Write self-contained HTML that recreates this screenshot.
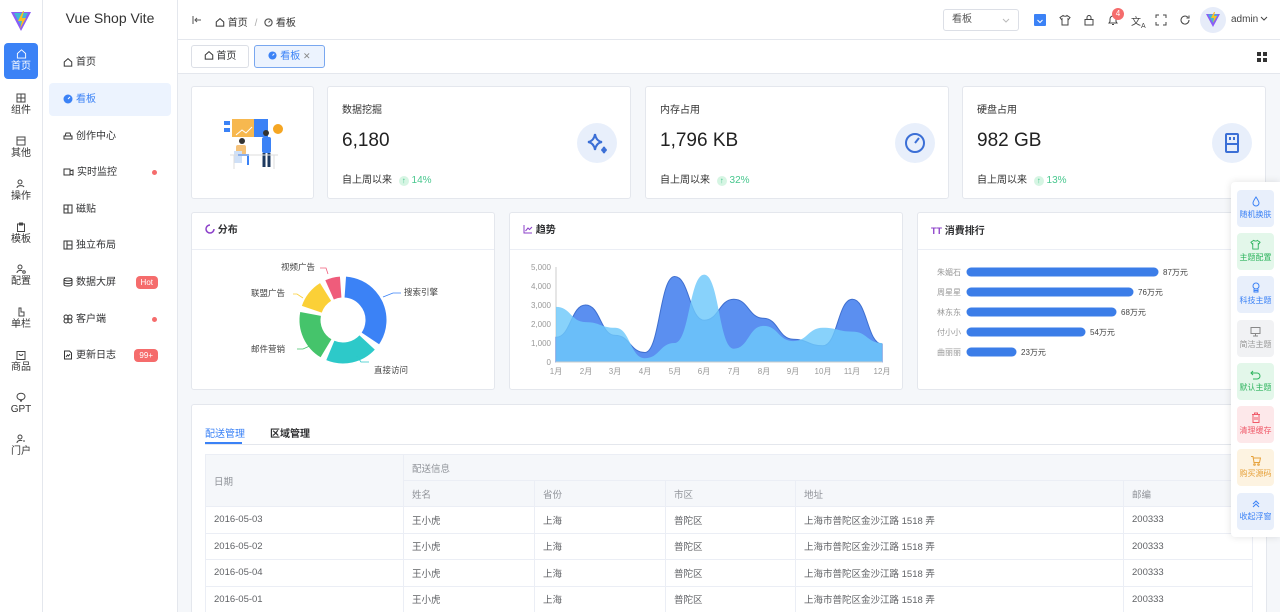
<!DOCTYPE html>
<html><head><meta charset="utf-8"><style>
*{box-sizing:border-box;margin:0;padding:0}
html{width:1280px;height:612px;overflow:hidden}
body{width:1280px;height:612px;overflow:hidden;position:relative;background:#f5f7fa;font-family:"Liberation Sans","Noto Sans CJK SC",sans-serif;color:#303133}
.a{position:absolute}
.rail{left:0;top:0;width:43px;height:612px;background:#fff;border-right:1px solid #e4e7ed}
.ri{position:absolute;left:4px;width:34px;height:36px;text-align:center;font-size:10px;color:#333;line-height:12px}
.ri svg{display:block;margin:5px auto 2px}
.side{left:43px;top:0;width:135px;height:612px;background:#fff;border-right:1px solid #e4e7ed}
.mi{position:absolute;left:6px;width:122px;height:33px;font-size:10px;line-height:33px;padding-left:14px;color:#303133}
.mi svg{vertical-align:-2px;margin-right:3px}
.dot{position:absolute;right:14px;top:14px;width:5px;height:5px;border-radius:50%;background:#f56c6c}
.bdg{position:absolute;right:13px;top:10px;height:13px;line-height:13px;border-radius:4px;background:#f56c6c;color:#fff;font-size:8px;padding:0 5px}
.hdr{left:178px;top:0;width:1102px;height:40px;background:#fff;border-bottom:1px solid #e4e7ed}
.tabs{left:178px;top:40px;width:1102px;height:34px;background:#fff;border-bottom:1px solid #e4e7ed}
.card{position:absolute;background:#fff;border:1px solid #e4e7ed;border-radius:3px}
.st{font-size:10px;color:#333;position:absolute;left:14px;top:14px}
.num{font-size:19px;position:absolute;left:14px;top:43px;color:#222}
.ft{font-size:10px;position:absolute;left:14px;top:84px;color:#333}
.ft b{font-weight:normal;color:#48c78e;margin-left:4px}
.ic{position:absolute;right:13px;top:36px;width:40px;height:40px;border-radius:50%;background:#e8effb}
.ch{height:37px;border-bottom:1px solid #ebeef5;font-size:10px;font-weight:bold;line-height:36px;padding-left:13px}
.fp{left:1231px;top:182px;width:49px;height:355px;background:#fff;box-shadow:0 0 8px rgba(0,0,0,.12);border-radius:4px 0 0 4px}
.fb{position:absolute;left:6px;width:37px;height:37px;border-radius:4px;font-size:8px;text-align:center;line-height:10px;padding-top:6px}
.fb svg{display:block;margin:0 auto 3px}
table{border-collapse:collapse;font-size:9.5px;color:#606266}
td{border:1px solid #ebeef5;height:26.5px;padding-left:8px}
th{border:1px solid #ebeef5;background:#f5f7fa;font-weight:normal;text-align:left;padding-left:8px;color:#909399;height:26px}
</style></head><body>

<div class="a rail">
 <svg class="a" style="left:10px;top:10px" width="22" height="22" viewBox="0 0 22 22"><path d="M1 2h20L11 21z" fill="#8b5cf6"/><path d="M4 3h14L11 16z" fill="#41b8d6"/><path d="M13 1l-5 10h4l-2 8 6-11h-4l2-7z" fill="#fbbf24"/></svg>
 <div class="ri" style="top:43px;background:#3b82f6;color:#fff;border-radius:4px"><svg width="11" height="11" viewBox="0 0 12 12" fill="none" stroke="#fff"><path d="M1.5 6L6 2l4.5 4v5h-9z"/></svg>首页</div>
 <div class="ri" style="top:88px"><svg width="10" height="10" viewBox="0 0 10 10" fill="none" stroke="#444"><rect x="1" y="1" width="8" height="8"/><path d="M1 5h8M5 1v8"/></svg>组件</div>
 <div class="ri" style="top:131px"><svg width="10" height="10" viewBox="0 0 10 10" fill="none" stroke="#444"><rect x="1" y="1" width="8" height="8"/><path d="M1 4h8"/></svg>其他</div>
 <div class="ri" style="top:174px"><svg width="10" height="10" viewBox="0 0 10 10" fill="none" stroke="#444"><circle cx="4" cy="3" r="2"/><path d="M1 9c0-3 6-3 7-1"/></svg>操作</div>
 <div class="ri" style="top:217px"><svg width="10" height="10" viewBox="0 0 10 10" fill="none" stroke="#444"><rect x="1.5" y="2" width="7" height="7.5"/><path d="M3.5 1h3v2h-3z"/></svg>模板</div>
 <div class="ri" style="top:259px"><svg width="10" height="10" viewBox="0 0 10 10" fill="none" stroke="#444"><circle cx="4" cy="3" r="2"/><path d="M1 9c0-3 5-3 5-2"/><circle cx="8" cy="8" r="1.3"/></svg>配置</div>
 <div class="ri" style="top:302px"><svg width="10" height="10" viewBox="0 0 10 10" fill="none" stroke="#444"><path d="M3 1v8h5V5H5V1z"/></svg>单栏</div>
 <div class="ri" style="top:345px"><svg width="10" height="10" viewBox="0 0 10 10" fill="none" stroke="#444"><rect x="1" y="1.5" width="8" height="8"/><path d="M3 4c1 2 3 2 4 0"/></svg>商品</div>
 <div class="ri" style="top:387px"><svg width="10" height="10" viewBox="0 0 10 10" fill="none" stroke="#444"><ellipse cx="5" cy="4.5" rx="4" ry="3.3"/><path d="M4 8l1 1.5 1-1.5"/></svg>GPT</div>
 <div class="ri" style="top:429px"><svg width="10" height="10" viewBox="0 0 10 10" fill="none" stroke="#444"><circle cx="4" cy="3" r="2"/><path d="M1 9c0-3 5-3 5-2M7 7h2"/></svg>门户</div>
</div>

<div class="a side">
 <div class="a" style="left:0;width:134px;top:10px;text-align:center;font-size:14px;color:#333">Vue Shop Vite</div>
 <div class="mi" style="top:46px"><svg width="10" height="10" viewBox="0 0 12 12" fill="none" stroke="#333" stroke-width="1.2"><path d="M1.5 6L6 2l4.5 4v5h-9z"/></svg>首页</div>
 <div class="mi" style="top:83px;background:#ecf3fe;color:#3b82f6;border-radius:4px"><svg width="10" height="10" viewBox="0 0 10 10"><circle cx="5" cy="5" r="4.5" fill="#3b82f6"/><path d="M5 5l2-2" stroke="#fff"/></svg>看板</div>
 <div class="mi" style="top:120px"><svg width="10" height="10" viewBox="0 0 10 10" fill="none" stroke="#333"><path d="M1 5h8v3H1zM2 5l1-3h4l1 3"/></svg>创作中心</div>
 <div class="mi" style="top:156px"><svg width="11" height="10" viewBox="0 0 11 10" fill="none" stroke="#333"><rect x="1" y="2" width="6" height="6"/><path d="M7 4l3-1v5l-3-1"/></svg>实时监控<span class="dot"></span></div>
 <div class="mi" style="top:193px"><svg width="10" height="10" viewBox="0 0 10 10" fill="none" stroke="#333"><rect x="1" y="1" width="8" height="8"/><path d="M5 1v8M1 5h4"/></svg>磁贴</div>
 <div class="mi" style="top:229px"><svg width="10" height="10" viewBox="0 0 10 10" fill="none" stroke="#333"><rect x="1" y="1" width="8" height="8"/><path d="M4 1v8M4 5h5"/></svg>独立布局</div>
 <div class="mi" style="top:266px"><svg width="10" height="10" viewBox="0 0 10 10" fill="none" stroke="#333"><ellipse cx="5" cy="2.5" rx="4" ry="1.5"/><path d="M1 2.5v5c0 2 8 2 8 0v-5M1 5c0 2 8 2 8 0"/></svg>数据大屏<span class="bdg">Hot</span></div>
 <div class="mi" style="top:303px"><svg width="10" height="10" viewBox="0 0 10 10" fill="none" stroke="#333"><circle cx="3" cy="3" r="2"/><circle cx="7" cy="3" r="2"/><circle cx="3" cy="7" r="2"/><circle cx="7" cy="7" r="2"/></svg>客户端<span class="dot"></span></div>
 <div class="mi" style="top:339px"><svg width="10" height="10" viewBox="0 0 10 10" fill="none" stroke="#333"><path d="M1.5 1h5l2 2v6h-7z"/><path d="M3 7l1.5-2 1 1 1.5-2"/></svg>更新日志<span class="bdg">99+</span></div>
</div>

<div class="a hdr">
 <svg class="a" style="left:14px;top:15px" width="10" height="10" viewBox="0 0 10 10" fill="none" stroke="#555"><path d="M1 1v8M9 5H3M5 3L3 5l2 2"/></svg>
 <div class="a" style="left:37px;top:14px;font-size:10px;color:#333"><svg width="10" height="10" viewBox="0 0 12 12" fill="none" stroke="#333" stroke-width="1.2" style="vertical-align:-1px"><path d="M1.5 6L6 2l4.5 4v5h-9z"/></svg> 首页 <span style="color:#aaa;margin:0 4px">/</span> <svg width="9" height="9" viewBox="0 0 10 10" style="vertical-align:-1px"><circle cx="5" cy="5" r="4" fill="none" stroke="#555" stroke-width="1.3"/><path d="M5 5l2-2" stroke="#555"/></svg> 看板</div>
 <div class="a" style="left:765px;top:9px;width:76px;height:22px;border:1px solid #dcdfe6;border-radius:3px;font-size:10px;color:#555;line-height:20px;padding-left:8px">看板<svg class="a" style="right:8px;top:8px" width="8" height="5" viewBox="0 0 8 5" fill="none" stroke="#bbb"><path d="M1 1l3 3 3-3"/></svg></div>
 <div class="a" style="left:856px;top:14px;width:12px;height:12px;background:#3b82f6;border-radius:1px"><svg width="12" height="12" viewBox="0 0 12 12"><path d="M3.5 5l2.5 2.5L8.5 5" stroke="#fff" fill="none"/></svg></div>
 <svg class="a" style="left:881px;top:14px" width="12" height="12" viewBox="0 0 12 12" fill="none" stroke="#444"><path d="M4 1.5L1 3.5l1.5 2L3 5v6h6V5l.5.5 1.5-2-3-2c-.5 1-3 1-4 0z"/></svg>
 <svg class="a" style="left:905px;top:14px" width="12" height="12" viewBox="0 0 12 12" fill="none" stroke="#444"><rect x="2" y="5.5" width="8" height="5.5"/><path d="M4 5.5V3.5a2 2 0 014 0v2"/></svg>
 <svg class="a" style="left:929px;top:14px" width="12" height="12" viewBox="0 0 12 12" fill="none" stroke="#444"><path d="M2 9h8L9 7.5V5a3 3 0 00-6 0v2.5zM5 10.5h2"/></svg>
 <div class="a" style="left:934px;top:8px;width:12px;height:12px;border-radius:6px;background:#f56c6c;color:#fff;font-size:8px;text-align:center;line-height:12px">4</div>
 <div class="a" style="left:953px;top:13px;font-size:10px;color:#444">文<sub style="font-size:7px">A</sub></div>
 <svg class="a" style="left:977px;top:14px" width="12" height="12" viewBox="0 0 12 12" fill="none" stroke="#444"><path d="M1 4V1h3M8 1h3v3M11 8v3H8M4 11H1V8"/></svg>
 <svg class="a" style="left:1001px;top:14px" width="12" height="12" viewBox="0 0 12 12" fill="none" stroke="#444"><path d="M10 6a4 4 0 11-1.2-2.8M10 1.5v2.5H7.5"/></svg>
 <div class="a" style="left:1022px;top:7px;width:26px;height:26px;border-radius:50%;background:#e6ecf9"><svg width="26" height="26" viewBox="0 0 26 26"><path d="M6 7h14l-7 13z" fill="#8b5cf6"/><path d="M8 7.5h10L13 16z" fill="#41b8d6"/><path d="M14 5l-3 6h3l-1 5 4-7h-3l1-4z" fill="#fbbf24"/></svg></div>
 <div class="a" style="left:1053px;top:14px;font-size:10px;color:#444">admin<svg width="8" height="5" viewBox="0 0 8 5" fill="none" stroke="#444" style="margin-left:2px;vertical-align:1px"><path d="M1 1l3 3 3-3"/></svg></div>
</div>

<div class="a tabs">
 <div class="a" style="left:13px;top:5px;width:58px;height:23px;border:1px solid #dcdfe6;border-radius:3px;background:#fff;font-size:10px;line-height:21px;text-align:center"><svg width="10" height="10" viewBox="0 0 12 12" fill="none" stroke="#333" stroke-width="1.2" style="vertical-align:-1px"><path d="M1.5 6L6 2l4.5 4v5h-9z"/></svg> 首页</div>
 <div class="a" style="left:76px;top:5px;width:71px;height:23px;border:1px solid #79a7ef;border-radius:3px;background:#ecf3fe;color:#3b82f6;font-size:10px;line-height:21px;text-align:center"><svg width="9" height="9" viewBox="0 0 10 10" style="vertical-align:-1px"><circle cx="5" cy="5" r="4.5" fill="#3b82f6"/><path d="M5 5l2-2" stroke="#fff"/></svg> 看板 <span style="color:#888;font-size:9px">✕</span></div>
 <svg class="a" style="left:1079px;top:12px" width="10" height="10" viewBox="0 0 10 10" fill="#333"><rect width="4" height="4"/><rect x="6" width="4" height="4"/><rect y="6" width="4" height="4"/><rect x="6" y="6" width="4" height="4"/></svg>
</div>

<div class="card" style="left:191px;top:86px;width:123px;height:113px">
 <svg class="a" style="left:28px;top:28px" width="66" height="58" viewBox="0 0 66 58"><rect x="12" y="4" width="28" height="18" fill="#f5a623" opacity=".8"/><rect x="34" y="4" width="14" height="18" fill="#3b82f6"/><rect x="4" y="6" width="6" height="4" fill="#3b82f6"/><rect x="4" y="13" width="6" height="4" fill="#3b82f6"/><circle cx="58" cy="14" r="5" fill="#f5a623"/><path d="M16 20l6-5 4 3 6-6" stroke="#fff" fill="none"/><circle cx="46" cy="18" r="3" fill="#333"/><rect x="42" y="22" width="9" height="16" fill="#3b82f6" rx="2"/><path d="M44 38v14M49 38v14" stroke="#1e3a5f" stroke-width="3"/><circle cx="22" cy="26" r="3" fill="#333"/><rect x="16" y="30" width="10" height="10" fill="#f5c27a" rx="2"/><rect x="14" y="36" width="8" height="12" fill="#cfe0f7"/><path d="M18 40h10v10" stroke="#3b82f6" fill="none" stroke-width="2"/><path d="M10 40h48M14 40v14M54 40v14" stroke="#ddd"/></svg>
</div>
<div class="card" style="left:327px;top:86px;width:304px;height:113px"><div class="st">数据挖掘</div><div class="num">6,180</div><div class="ft">自上周以来 <b><span style="display:inline-block;width:10px;height:10px;border-radius:5px;background:#d6f5e3;text-align:center;line-height:10px;font-size:8px">↑</span> 14%</b></div><div class="ic"><svg width="40" height="40" viewBox="0 0 40 40" fill="none" stroke="#3b6fd6" stroke-width="2"><path d="M18 11q1 7 7 8-6 1-7 8-1-7-7-8 6-1 7-8z"/><path d="M27 24q.5 2.5 2.5 3-2 .5-2.5 3-.5-2.5-2.5-3 2-.5 2.5-3z" fill="#3b6fd6"/></svg></div></div>
<div class="card" style="left:645px;top:86px;width:304px;height:113px"><div class="st">内存占用</div><div class="num">1,796 KB</div><div class="ft">自上周以来 <b><span style="display:inline-block;width:10px;height:10px;border-radius:5px;background:#d6f5e3;text-align:center;line-height:10px;font-size:8px">↑</span> 32%</b></div><div class="ic"><svg width="40" height="40" viewBox="0 0 40 40" fill="none" stroke="#3b6fd6" stroke-width="2"><circle cx="20" cy="20" r="9"/><path d="M20 20l4-5"/></svg></div></div>
<div class="card" style="left:962px;top:86px;width:304px;height:113px"><div class="st">硬盘占用</div><div class="num">982 GB</div><div class="ft">自上周以来 <b><span style="display:inline-block;width:10px;height:10px;border-radius:5px;background:#d6f5e3;text-align:center;line-height:10px;font-size:8px">↑</span> 13%</b></div><div class="ic"><svg width="40" height="40" viewBox="0 0 40 40" fill="none" stroke="#3b6fd6" stroke-width="2"><rect x="14" y="11" width="12" height="18" rx="1"/><path d="M14 21h12M18 14v3M22 14v3"/></svg></div></div>

<div class="card" style="left:191px;top:212px;width:304px;height:178px"><div class="ch"><svg width="10" height="10" viewBox="0 0 10 10" style="vertical-align:-1px"><path d="M5 1a4 4 0 104 4" fill="none" stroke="#8b3fc9" stroke-width="1.5"/></svg> 分布</div></div>
<div class="card" style="left:509px;top:212px;width:394px;height:178px"><div class="ch"><svg width="10" height="10" viewBox="0 0 10 10" style="vertical-align:-1px" fill="none" stroke="#8b3fc9"><path d="M1 1v8h8M2.5 7l2.5-3 1.5 1.5L9 3"/></svg> 趋势</div></div>
<div class="card" style="left:917px;top:212px;width:330px;height:178px"><div class="ch"><span style="color:#8b3fc9;font-size:9px">TT</span> 消費排行</div></div>

<svg class="a" style="left:0;top:0" width="1280" height="612">
 <g transform="translate(343 320)" fill="none" stroke-width="21">
  <circle r="33" stroke="#3b82f6" stroke-dasharray="69 300" transform="rotate(-86)"/>
  <circle r="33" stroke="#2dc9c9" stroke-dasharray="40 300" transform="rotate(43)"/>
  <circle r="33" stroke="#45c46b" stroke-dasharray="40 300" transform="rotate(121)"/>
  <circle r="33" stroke="#fbd037" stroke-dasharray="22.5 300" transform="rotate(199)"/>
  <circle r="33" stroke="#ef5c7b" stroke-dasharray="11.5 300" transform="rotate(246)"/>
 </g>
 <g fill="none" stroke-width=".8">
  <path d="M383 297l10-4h8" stroke="#3b82f6"/><path d="M357 356l4 6h8" stroke="#2dc9c9"/><path d="M312 345l-9 4h-6" stroke="#45c46b"/><path d="M303 298l-6-4h-4" stroke="#fbd037"/><path d="M328 274l-2-6h-6" stroke="#ef5c7b"/>
 </g>
 <g font-size="8.5" fill="#444">
  <text x="404" y="295">搜索引擎</text><text x="374" y="373">直接访问</text><text x="251" y="352">邮件营销</text><text x="251" y="296">联盟广告</text><text x="281" y="270">视频广告</text>
 </g>
 <g font-size="8" fill="#999" text-anchor="end">
  <text x="551" y="270">5,000</text><text x="551" y="289">4,000</text><text x="551" y="308">3,000</text><text x="551" y="327">2,000</text><text x="551" y="346">1,000</text><text x="551" y="365">0</text>
 </g>
 <path d="M556 267v95" stroke="#ccc"/>
 <path d="M556,337.3 C570.8,337.3 570.8,305 585.6,305 C600.4,305 600.5,335.4 615.3,335.4 C630.1,335.4 630.1,352.5 644.9,352.5 C659.7,352.5 659.8,276.5 674.6,276.5 C689.4,276.5 689.4,320.2 704.2,320.2 C719,320.2 719,299.3 733.8,299.3 C748.6,299.3 748.7,318.3 763.5,318.3 C778.3,318.3 778.3,339.2 793.1,339.2 C807.9,339.2 808,345.8 822.8,345.8 C837.6,345.8 837.6,299.3 852.4,299.3 C867.2,299.3 867.2,344 882,344 L882,362 L556,362 Z" fill="#5b8ff0" stroke="#3f6fcf"/>
 <path d="M556,306.9 C570.8,306.9 570.8,322.1 585.6,322.1 C600.4,322.1 600.5,327.8 615.3,327.8 C630.1,327.8 630.1,358.2 644.9,358.2 C659.7,358.2 659.8,343 674.6,343 C689.4,343 689.4,274.6 704.2,274.6 C719,274.6 719,348.7 733.8,348.7 C748.6,348.7 748.7,325.9 763.5,325.9 C778.3,325.9 778.3,341.1 793.1,341.1 C807.9,341.1 808,327.8 822.8,327.8 C837.6,327.8 837.6,331.6 852.4,331.6 C867.2,331.6 867.2,343 882,343 L882,362 L556,362 Z" fill="rgba(110,200,250,0.82)"/>
 <path d="M556 362h326" stroke="#ccc"/>
 <g font-size="8" fill="#999" text-anchor="middle">
  <text x="556" y="374">1月</text><text x="586" y="374">2月</text><text x="615" y="374">3月</text><text x="645" y="374">4月</text><text x="675" y="374">5月</text><text x="704" y="374">6月</text><text x="734" y="374">7月</text><text x="764" y="374">8月</text><text x="793" y="374">9月</text><text x="823" y="374">10月</text><text x="852" y="374">11月</text><text x="882" y="374">12月</text>
 </g>
 <g stroke="#3b7de8" stroke-width="9" stroke-linecap="round">
  <path d="M971 272h183"/><path d="M971 292h158"/><path d="M971 312h141"/><path d="M971 332h110"/><path d="M971 352h41"/>
 </g>
 <g font-size="8" fill="#999"><text x="937" y="275">朱媚石</text><text x="937" y="295">周星星</text><text x="937" y="315">林东东</text><text x="937" y="335">付小小</text><text x="937" y="355">曲丽丽</text></g>
 <g font-size="8" fill="#444"><text x="1163" y="275">87万元</text><text x="1138" y="295">76万元</text><text x="1121" y="315">68万元</text><text x="1090" y="335">54万元</text><text x="1021" y="355">23万元</text></g>
</svg>

<div class="card" style="left:191px;top:404px;width:1076px;height:210px;border-bottom:none">
 <div class="a" style="left:13px;top:20px;font-size:10px;color:#3b82f6">配送管理</div>
 <div class="a" style="left:13px;top:37px;width:37px;height:2px;background:#3b82f6"></div>
 <div class="a" style="left:78px;top:20px;font-size:10px;font-weight:bold">区域管理</div>
 <div class="a" style="left:13px;top:39px;width:1048px;height:1px;background:#e4e7ed"></div>
 <table class="a" style="left:13px;top:49px;width:1048px">
  <tr><th rowspan="2" style="width:198px">日期</th><th colspan="5">配送信息</th></tr>
  <tr><th style="width:131px">姓名</th><th style="width:131px">省份</th><th style="width:130px">市区</th><th style="width:328px">地址</th><th>邮编</th></tr>
  <tr><td>2016-05-03</td><td>王小虎</td><td>上海</td><td>普陀区</td><td>上海市普陀区金沙江路 1518 弄</td><td>200333</td></tr>
  <tr><td>2016-05-02</td><td>王小虎</td><td>上海</td><td>普陀区</td><td>上海市普陀区金沙江路 1518 弄</td><td>200333</td></tr>
  <tr><td>2016-05-04</td><td>王小虎</td><td>上海</td><td>普陀区</td><td>上海市普陀区金沙江路 1518 弄</td><td>200333</td></tr>
  <tr><td>2016-05-01</td><td>王小虎</td><td>上海</td><td>普陀区</td><td>上海市普陀区金沙江路 1518 弄</td><td>200333</td></tr>
 </table>
</div>

<div class="a fp">
 <div class="fb" style="top:8px;background:#e8effb;color:#3b82f6"><svg width="10" height="11" viewBox="0 0 10 11" fill="none" stroke="#3b82f6"><path d="M5 1C3 4 2 5.5 2 7a3 3 0 006 0c0-1.5-1-3-3-6z"/></svg>随机换肤</div>
 <div class="fb" style="top:51px;background:#e3f7ea;color:#2fb45f"><svg width="11" height="11" viewBox="0 0 12 12" fill="none" stroke="#2fb45f"><path d="M4 1.5L1 3.5l1.5 2L3 5v6h6V5l.5.5 1.5-2-3-2c-.5 1-3 1-4 0z"/></svg>主题配置</div>
 <div class="fb" style="top:94px;background:#e8effb;color:#3b82f6"><svg width="10" height="11" viewBox="0 0 10 11" fill="none" stroke="#3b82f6"><circle cx="5" cy="4" r="3"/><path d="M3 7v3h4V7M3 8.5h4"/></svg>科技主题</div>
 <div class="fb" style="top:138px;background:#f1f2f4;color:#999"><svg width="11" height="11" viewBox="0 0 11 11" fill="none" stroke="#888"><rect x="1" y="1.5" width="9" height="6"/><path d="M5.5 7.5v2M3 10h5"/></svg>简洁主题</div>
 <div class="fb" style="top:181px;background:#e3f7ea;color:#2fb45f"><svg width="11" height="11" viewBox="0 0 11 11" fill="none" stroke="#2fb45f"><path d="M3 2L1 4l2 2M1 4h6a3 3 0 010 6H3"/></svg>默认主题</div>
 <div class="fb" style="top:224px;background:#fde8ea;color:#f05a6a"><svg width="10" height="11" viewBox="0 0 10 11" fill="none" stroke="#f05a6a"><path d="M1 2.5h8M3.5 2.5V1h3v1.5M2 2.5v8h6v-8M4 5v3M6 5v3"/></svg>清理缓存</div>
 <div class="fb" style="top:267px;background:#fdf3e1;color:#e6a23c"><svg width="11" height="11" viewBox="0 0 11 11" fill="none" stroke="#e6a23c"><path d="M1 1.5h2l1 6h5.5l1-4.5H3.3"/><circle cx="4.5" cy="9.5" r=".8"/><circle cx="8.5" cy="9.5" r=".8"/></svg>购买源码</div>
 <div class="fb" style="top:311px;background:#e8effb;color:#3b82f6"><svg width="10" height="10" viewBox="0 0 10 10" fill="none" stroke="#3b82f6"><path d="M2 5l3-3 3 3M2 8l3-3 3 3"/></svg>收起浮窗</div>
</div>
</body></html>
